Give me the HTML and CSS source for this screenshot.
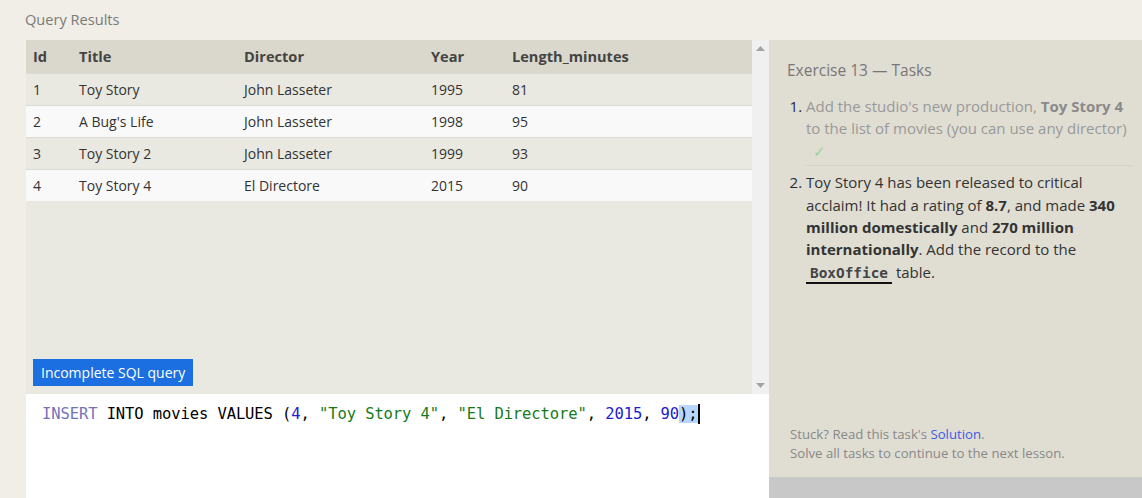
FILE: index.html
```html
<!DOCTYPE html>
<html>
<head>
<meta charset="utf-8">
<link rel="stylesheet" href="styles.css">
</head>
<body>
<div class="page">
  <div class="top-title">Query Results</div>
  <div class="main">
    <div class="left">
      <div class="results">
        <div class="results-inner">
          <table class="grid">
            <thead>
              <tr><th class="c1">Id</th><th class="c2">Title</th><th class="c3">Director</th><th class="c4">Year</th><th>Length_minutes</th></tr>
            </thead>
            <tbody>
              <tr><td>1</td><td>Toy Story</td><td>John Lasseter</td><td>1995</td><td>81</td></tr>
              <tr><td>2</td><td>A Bug's Life</td><td>John Lasseter</td><td>1998</td><td>95</td></tr>
              <tr><td>3</td><td>Toy Story 2</td><td>John Lasseter</td><td>1999</td><td>93</td></tr>
              <tr><td>4</td><td>Toy Story 4</td><td>El Directore</td><td>2015</td><td>90</td></tr>
            </tbody>
          </table>
          <div class="spacer"></div>
          <div class="status"><span class="badge">Incomplete SQL query</span></div>
        </div>
        <div class="scrollbar">
          <svg class="arrow" width="9" height="5" viewBox="0 0 9 5"><path d="M0 5 L4.5 0 L9 5 Z" fill="#a3a3a3"/></svg>
          <svg class="arrow" width="9" height="5" viewBox="0 0 9 5"><path d="M0 0 L4.5 5 L9 0 Z" fill="#a3a3a3"/></svg>
        </div>
      </div>
      <div class="editor">
        <div class="code"><span class="kw">INSERT</span> INTO movies VALUES (<span class="num">4</span>, <span class="str">"Toy Story 4"</span>, <span class="str">"El Directore"</span>, <span class="num">2015</span>, <span class="num">90</span><span class="sel">);</span><span class="cursor"></span></div>
      </div>
    </div>
    <div class="right">
      <div class="tasks">
        <h2 class="tasks-title">Exercise 13 — Tasks</h2>
        <ol class="task-list">
          <li class="task done">
            <span class="task-text">Add the studio's new production, <b>Toy Story 4</b> to the list of movies (you can use any director)</span>
            <span class="check">✓</span>
          </li>
          <li class="task">
            <span class="task-text-dark">Toy Story 4 has been released to critical acclaim! It had a rating of <b>8.7</b>, and made <b>340 million domestically</b> and <b>270 million internationally</b>. Add the record to the <code class="tbl">BoxOffice</code> table.</span>
          </li>
        </ol>
        <div class="grow"></div>
        <div class="footer">
          <div>Stuck? Read this task's <span class="link">Solution</span>.</div>
          <div>Solve all tasks to continue to the next lesson.</div>
        </div>
      </div>
      <div class="bottom-bar"></div>
    </div>
  </div>
</div>
</body>
</html>
```

FILE: styles.css
```css
* { box-sizing: border-box; }
html, body {
  margin: 0;
  padding: 0;
  background: #f0eee6;
  font-family: "Open Sans", "Noto Sans", sans-serif;
  overflow: hidden;
}
.page {
  width: 1142px;
  height: 498px;
  display: flex;
  flex-direction: column;
}
.top-title {
  height: 40px;
  padding: 9px 0 0 25px;
  font-size: 14.6px;
  color: #7a7a7a;
  line-height: 20px;
}
.main {
  flex: 1;
  display: flex;
  min-height: 0;
}
.left {
  width: 769px;
  padding-left: 26px;
  display: flex;
  flex-direction: column;
}
.results {
  height: 354px;
  display: flex;
  background: #e9e8e1;
}
.results-inner {
  flex: 1;
  display: flex;
  flex-direction: column;
}
.grid {
  width: 100%;
  border-collapse: collapse;
  font-size: 14px;
  color: #333;
}
.grid th {
  background: #dad8cc;
  height: 33px;
  text-align: left;
  font-weight: 700;
  font-size: 14.6px;
  color: #444;
  padding: 0 0 0 7px;
}
.grid .c1 { width: 46px; }
.grid .c2 { width: 165px; }
.grid .c3 { width: 187px; }
.grid .c4 { width: 81px; }
.grid td {
  height: 32px;
  padding: 0 0 0 7px;
  border-top: 1px solid #dcdad2;
}
.grid tbody tr:nth-child(odd) td { background: #e9e8e1; }
.grid tbody tr:nth-child(even) td { background: #f9f9f9; }
.spacer { flex: 1; }
.status {
  padding: 0 0 8px 7px;
}
.badge {
  display: inline-block;
  background: #1b6fe0;
  color: #fff;
  font-size: 14px;
  height: 27px;
  line-height: 27px;
  padding: 0 8px;
}
.scrollbar {
  width: 17px;
  background: #f0f0f0;
  display: flex;
  flex-direction: column;
  justify-content: space-between;
  align-items: center;
  padding: 6px 0 6px;
}
.arrow { display: block; }
.editor {
  flex: 1;
  background: #fff;
  padding: 9px 0 0 16px;
}
.code {
  font-family: "DejaVu Sans Mono", "Liberation Mono", monospace;
  font-size: 15.5px;
  letter-spacing: -0.1px;
  line-height: 22px;
  color: #000;
  white-space: pre;
}
.kw { color: #7373b8; }
.num { color: #1c1cd0; }
.str { color: #177a17; }
.sel { background: #b8d6fb; }
.cursor {
  display: inline-block;
  width: 2px;
  height: 20px;
  background: #000;
  vertical-align: -5px;
}
.right {
  width: 373px;
  display: flex;
  flex-direction: column;
}
.tasks {
  flex: 1;
  background: #e0ded3;
  display: flex;
  flex-direction: column;
  padding: 18px 9px 14px 18px;
}
.tasks-title {
  margin: 0;
  font-weight: 400;
  font-size: 15.5px;
  line-height: 24px;
  color: #777;
}
.task-list {
  margin: 13px 0 0 0;
  padding: 0 0 0 19px;
  font-size: 15px;
  line-height: 22.4px;
  color: #2b2b3b;
}
.task {
  padding-left: 0;
}
.task.done {
  border-bottom: 1px solid #d6d4c9;
  padding-bottom: 3px;
  margin-bottom: 5px;
}
.task-text { color: #999; }
.task-text b { color: #8a8a8a; }
.task-text-dark { color: #333; }
.task-text-dark b { color: #333; }
.check {
  display: block;
  color: #9ed29e;
  padding-left: 7px;
  font-size: 15px;
}
.tbl {
  font-family: "DejaVu Sans Mono", "Liberation Mono", monospace;
  font-weight: 700;
  font-size: 14.4px;
  color: #444;
  padding: 0 4px 1px 4px;
  border-bottom: 2px solid #111;
}
.grow { flex: 1; }
.footer {
  padding-left: 3px;
  font-size: 13.2px;
  line-height: 19px;
  color: #888;
}
.link { color: #3c5ce6; }
.bottom-bar {
  height: 21px;
  background: #c8c8c8;
}
```
